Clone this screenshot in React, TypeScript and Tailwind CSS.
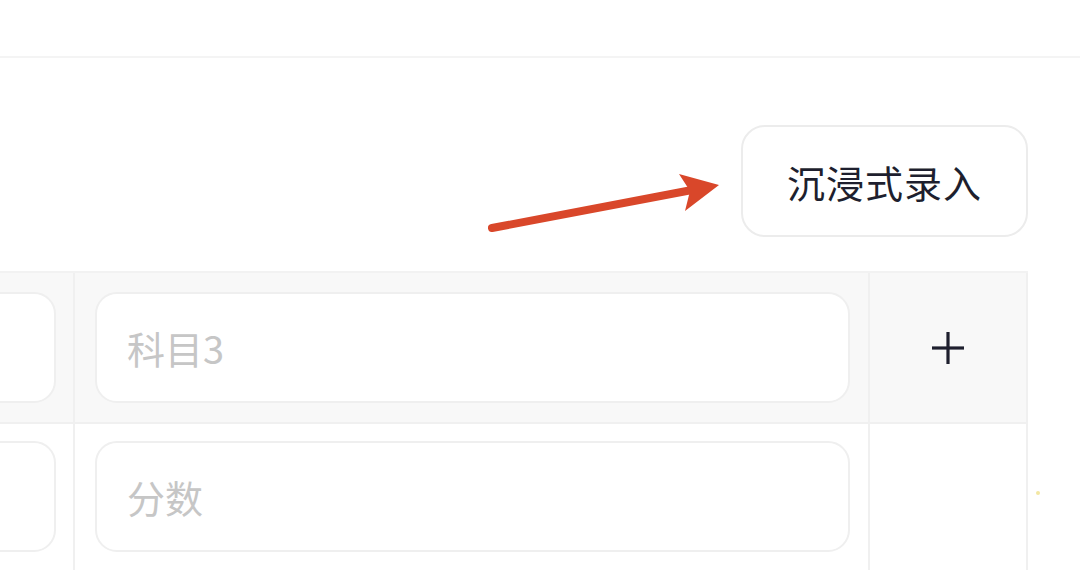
import React from 'react'

const FONT = "font-['Noto_Sans_CJK_SC','Noto_Sans',sans-serif]"

function ScoreInput({ placeholder }: { placeholder?: string }) {
  return (
    <input
      readOnly
      placeholder={placeholder}
      className="block w-full h-[111px] rounded-[22px] border-2 border-[#efefef] bg-white pl-[30px] text-[38px] text-[#1e1f2e] placeholder:text-[#c6c6c6] outline-none"
    />
  )
}

export default function App() {
  return (
    <div className={`relative w-[1080px] h-[570px] overflow-hidden bg-white ${FONT}`}>
      {/* top bar */}
      <header className="h-[58px] border-b-2 border-[#f4f4f4]" />

      {/* toolbar */}
      <div className="flex justify-end pr-[52px] pt-[67px]">
        <button className="w-[287px] h-[112px] rounded-[24px] border-2 border-[#ececec] bg-white text-[38px] text-[#1e1f2e] tracking-[1px]">
          沉浸式录入
        </button>
      </div>

      {/* hint arrow */}
      <svg className="absolute left-0 top-0 pointer-events-none" width="1080" height="570">
        <line x1="492" y1="228" x2="692" y2="190" stroke="#d9472a" strokeWidth="8" strokeLinecap="round" />
        <polygon points="719,185 679,174 690,191 685,211" fill="#d9472a" />
      </svg>

      {/* score table */}
      <div className="mt-[34px] -ml-[200px] w-[1228px] grid grid-cols-[275px_795px_158px] border-t-2 border-[#f2f2f2]">
        <div className="bg-[#f8f8f8] border-r-2 border-b-2 border-[#f0f0f0] py-[19px] pr-[17px]">
          <ScoreInput />
        </div>
        <div className="bg-[#f8f8f8] border-r-2 border-b-2 border-[#f0f0f0] py-[19px] pl-[20px] pr-[18px]">
          <ScoreInput placeholder="科目3" />
        </div>
        <div className="bg-[#f8f8f8] border-r-2 border-b-2 border-[#f0f0f0] flex items-center justify-center">
          <svg width="34" height="34" viewBox="0 0 34 34" fill="none" stroke="#1e1f2e" strokeWidth="3.2">
            <line x1="1" y1="17" x2="33" y2="17" />
            <line x1="17" y1="1" x2="17" y2="33" />
          </svg>
        </div>

        <div className="border-r-2 border-[#f0f0f0] pt-[17px] pb-[30px] pr-[17px]">
          <ScoreInput />
        </div>
        <div className="border-r-2 border-[#f0f0f0] pt-[17px] pb-[30px] pl-[20px] pr-[18px]">
          <ScoreInput placeholder="分数" />
        </div>
        <div className="border-r-2 border-[#f0f0f0]" />
      </div>

      <span className="absolute left-[1036px] top-[491px] w-[4px] h-[4px] rounded-full bg-[#f3e7a2]" />
    </div>
  )
}
